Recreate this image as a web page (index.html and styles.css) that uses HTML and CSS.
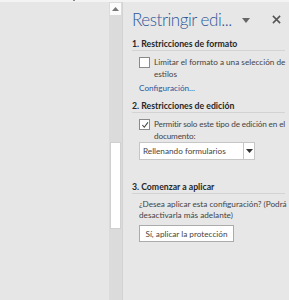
FILE: index.html
```html
<!DOCTYPE html>
<html lang="es">
<head>
  <meta charset="UTF-8">
  <title>Restringir edición</title>
  <link rel="stylesheet" href="styles.css">
</head>
<body>
  <div class="topline"><span class="tick"></span></div>

  <div class="window">
    <!-- documento -->
    <div class="doc"></div>

    <!-- barra de desplazamiento -->
    <div class="scrollbar">
      <div class="scroll-up">
        <svg width="7" height="4" viewBox="0 0 7 4"><path d="M0 4 L3.5 0 L7 4 Z" fill="#777"/></svg>
      </div>
      <div class="scroll-thumb"></div>
    </div>

    <!-- panel -->
    <div class="pane">
      <div class="pane-header">
        <span class="pane-title">Restringir edi...</span>
        <span class="pane-menu">
          <svg width="8" height="5" viewBox="0 0 8 5"><path d="M0 0 L8 0 L4 5 Z" fill="#666"/></svg>
        </span>
        <span class="pane-close">
          <svg width="9" height="9" viewBox="0 0 10 10"><path d="M1 1 L9 9 M9 1 L1 9" stroke="#555" stroke-width="1.7"/></svg>
        </span>
      </div>

      <div class="heading">1. Restricciones de formato</div>
      <div class="check-row">
        <span class="box"></span>
        <span class="check-text">Limitar el formato a una selección de<br>estilos</span>
      </div>
      <a class="link">Configuración...</a>

      <div class="heading h2">2. Restricciones de edición</div>
      <div class="check-row">
        <span class="box">
          <svg width="8" height="8" viewBox="0 0 9 9"><path d="M1.5 4.5 L3.7 7 L7.8 1.5" fill="none" stroke="#444" stroke-width="1.2"/></svg>
        </span>
        <span class="check-text tight">Permitir solo este tipo de edición en el<br>documento:</span>
      </div>
      <div class="select">
        <span class="select-text">Rellenando formularios</span>
        <span class="select-btn">
          <svg width="7" height="4" viewBox="0 0 7 4"><path d="M0 0 L7 0 L3.5 4 Z" fill="#333"/></svg>
        </span>
      </div>

      <div class="heading h3">3. Comenzar a aplicar</div>
      <p class="info">¿Desea aplicar esta configuración? (Podrá<br>desactivarla más adelante)</p>
      <button class="apply">Sí, aplicar la protección</button>
    </div>
  </div>
</body>
</html>
```

FILE: styles.css
```css
body {
  margin: 0;
  width: 289px;
  height: 300px;
  overflow: hidden;
  background: #e6e6e6;
  font-family: Lato, "Noto Sans", sans-serif;
  font-size: 8.2px;
  color: #444;
  white-space: nowrap;
}

.topline {
  height: 2px;
  background: #f3f3f3;
  position: relative;
}

.tick {
  position: absolute;
  left: 73px;
  top: 0;
  width: 2px;
  height: 1px;
  background: #888;
}

.window {
  display: flex;
  height: 298px;
}

.doc {
  flex: none;
  width: 109px;
  background: #e6e6e6;
}

/* Scrollbar */
.scrollbar {
  flex: none;
  width: 13px;
  background: #dbdbdb;
  border-right: 1px solid #d2d2d2;
  display: flex;
  flex-direction: column;
  align-items: center;
}

.scroll-up {
  width: 11px;
  height: 12px;
  margin-top: 1px;
  background: #fbfbfb;
  display: flex;
  align-items: center;
  justify-content: center;
}

.scroll-thumb {
  width: 11px;
  height: 87px;
  margin-top: 127px;
  background: #fff;
  border: 1px solid #d0d0d0;
  box-sizing: border-box;
}

/* Panel */
.pane {
  flex: 1;
  min-width: 0;
  background: #e7e7e7;
  padding-left: 9px;
  padding-right: 4px;
}

.pane-header {
  display: flex;
  align-items: center;
  height: 34px;
}

.pane-title {
  font-size: 17px;
  font-weight: 300;
  color: #2b579a;
  letter-spacing: -0.45px;
  width: 107px;
}

.pane-menu {
  margin-left: 3px;
  display: flex;
  padding-top: 3px;
}

.pane-close {
  margin-left: 22px;
  display: flex;
}

.heading {
  font-weight: bold;
  font-size: 8.7px;
  color: #262626;
  line-height: 13px;
  margin-top: 1px;
  border-bottom: 1px solid #d3d3d3;
}

.h2 {
  margin-top: 5px;
}

.h3 {
  margin-top: 20px;
}

.check-row {
  display: flex;
  align-items: flex-start;
  margin: 5px 0 0 7px;
  line-height: 12px;
}

.box {
  flex: none;
  width: 9px;
  height: 9px;
  margin-top: 1px;
  background: #fff;
  border: 1px solid #8a8a8a;
  display: flex;
  align-items: center;
  justify-content: center;
}

.check-text {
  margin-left: 4px;
  color: #444;
}

.tight {
  letter-spacing: -0.15px;
}

.link {
  display: block;
  margin: 2px 0 0 7px;
  line-height: 12px;
  color: #2b579a;
}

.select {
  display: flex;
  width: 116px;
  height: 18px;
  margin-left: 7px;
  background: #fff;
  border: 1px solid #c6c6c6;
  box-sizing: border-box;
}

.select-text {
  flex: 1;
  padding-left: 3px;
  line-height: 16px;
  color: #444;
}

.select-btn {
  width: 10px;
  border-left: 1px solid #c6c6c6;
  display: flex;
  align-items: center;
  justify-content: center;
}

.info {
  margin: 5px 0 0 7px;
  line-height: 11px;
  color: #444;
}

.apply {
  margin: 4px 0 0 7px;
  width: 95px;
  height: 17px;
  padding: 0;
  background: #fff;
  border: 1px solid #ababab;
  font-family: inherit;
  font-size: 8.2px;
  color: #444;
}
```
